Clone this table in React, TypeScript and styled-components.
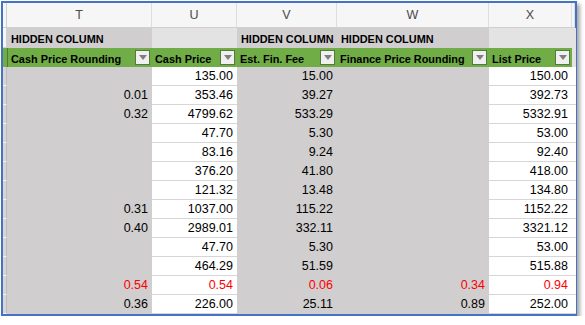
import { FC, Fragment, ReactElement } from 'react';
import styled, { createGlobalStyle } from 'styled-components';

const GlobalStyle = createGlobalStyle`
  body {
    margin: 0;
    background: #ffffff;
    font-family: "Liberation Sans", Arial, sans-serif;
  }
`;

type Col = { letter: string; width: number; hidden: boolean; title: string };

const columns: Col[] = [
  { letter: '', width: 4, hidden: false, title: '' },
  { letter: 'T', width: 145, hidden: true, title: 'Cash Price Rounding' },
  { letter: 'U', width: 85, hidden: false, title: 'Cash Price' },
  { letter: 'V', width: 100, hidden: true, title: 'Est. Fin. Fee' },
  { letter: 'W', width: 152, hidden: true, title: 'Finance Price Rounding' },
  { letter: 'X', width: 83, hidden: false, title: 'List Price' },
  { letter: '', width: 3, hidden: false, title: '' },
];

// T, U, V, W, X ; last flag = red text
const rows: [string, string, string, string, string, boolean][] = [
  ['', '135.00', '15.00', '', '150.00', false],
  ['0.01', '353.46', '39.27', '', '392.73', false],
  ['0.32', '4799.62', '533.29', '', '5332.91', false],
  ['', '47.70', '5.30', '', '53.00', false],
  ['', '83.16', '9.24', '', '92.40', false],
  ['', '376.20', '41.80', '', '418.00', false],
  ['', '121.32', '13.48', '', '134.80', false],
  ['0.31', '1037.00', '115.22', '', '1152.22', false],
  ['0.40', '2989.01', '332.11', '', '3321.12', false],
  ['', '47.70', '5.30', '', '53.00', false],
  ['', '464.29', '51.59', '', '515.88', false],
  ['0.54', '0.54', '0.06', '0.34', '0.94', true],
  ['0.36', '226.00', '25.11', '0.89', '252.00', false],
];

const Frame = styled.div`
  margin: 1px 0 0 1px;
  width: 572px;
  border: 2px solid #4472c4;
  box-shadow: 3px 3px 4px rgba(0, 0, 0, 0.35);
  background: #ffffff;
`;

const Sheet = styled.div`
  display: grid;
  grid-template-columns: ${columns.map((c) => `${c.width}px`).join(' ')};
  grid-template-rows: 25px 20px 19px repeat(13, 19px);
`;

const LetterCell = styled.div<{ $edge?: boolean }>`
  box-sizing: border-box;
  display: flex;
  align-items: center;
  justify-content: center;
  background: #f6f6f6;
  border-bottom: 1px solid #cfcfcf;
  border-right: 1px solid ${({ $edge }) => ($edge ? '#cfcfcf' : '#dedede')};
  color: #4a4a4a;
  font-size: 12.5px;
`;

const TitleCell = styled.div<{ $hidden: boolean }>`
  box-sizing: border-box;
  display: flex;
  align-items: flex-end;
  padding: 0 0 3px 4px;
  background: ${({ $hidden }) => ($hidden ? '#d0cece' : '#e4e3e3')};
  color: #000000;
  font-size: 10.9px;
  font-weight: bold;
  white-space: nowrap;
`;

const HeadCell = styled.div<{ $edge?: boolean }>`
  box-sizing: border-box;
  display: flex;
  align-items: center;
  justify-content: space-between;
  padding: 0 2px 0 3px;
  background: #70ad47;
  border-left: ${({ $edge }) => ($edge ? '1px solid #4d7a31' : 'none')};
  color: #000000;
  font-size: 10.9px;
  font-weight: bold;
  white-space: nowrap;
`;

const HeadLabel = styled.span`
  padding-top: 2px;
`;

const FilterButton = styled.span`
  box-sizing: border-box;
  display: flex;
  align-items: center;
  justify-content: center;
  width: 15px;
  height: 15px;
  background: #f0f0f0;
  border: 1px solid #55793f;
`;

const DataCell = styled.div<{ $hidden: boolean; $red: boolean }>`
  box-sizing: border-box;
  display: flex;
  align-items: flex-end;
  justify-content: flex-end;
  padding: 0 4px 2px 0;
  background: ${({ $hidden }) => ($hidden ? '#d0cece' : '#ffffff')};
  border-bottom: 1px solid ${({ $hidden }) => ($hidden ? '#d0cece' : '#d6d6d6')};
  color: ${({ $red }) => ($red ? '#ff0000' : '#000000')};
  font-size: 12.5px;
`;

const EdgeCell = styled.div`
  box-sizing: border-box;
  background: #d6d6d6;
  border-bottom: 1px solid #f2f2f2;
  border-right: 1px solid #bdbdbd;
`;

const Filter: FC = (): ReactElement => (
  <FilterButton>
    <svg width="8" height="5" viewBox="0 0 8 5">
      <polygon points="0,0 8,0 4,5" fill="#7f7f7f" />
    </svg>
  </FilterButton>
);

const App: FC = (): ReactElement => {
  const main = columns.slice(1, 6);

  return (
    <>
      <GlobalStyle />
      <Frame>
        <Sheet>
          {columns.map((c, i) => (
            <LetterCell key={`l${i}`} $edge={i === 0}>
              {c.letter}
            </LetterCell>
          ))}

          <LetterCell $edge />
          {main.map((c, i) => (
            <TitleCell key={`t${i}`} $hidden={c.hidden}>
              {c.hidden ? 'HIDDEN COLUMN' : ''}
            </TitleCell>
          ))}
          <TitleCell $hidden={false} />

          <HeadCell />
          {main.map((c, i) => (
            <HeadCell key={`h${i}`} $edge={i === 0}>
              <HeadLabel>{c.title}</HeadLabel>
              <Filter />
            </HeadCell>
          ))}
          <TitleCell $hidden={false} />

          {rows.map((r, ri) => (
            <Fragment key={`r${ri}`}>
              <EdgeCell />
              {main.map((c, ci) => (
                <DataCell key={ci} $hidden={c.hidden} $red={r[5]}>
                  {r[ci]}
                </DataCell>
              ))}
              <DataCell $hidden={false} $red={false} />
            </Fragment>
          ))}
        </Sheet>
      </Frame>
    </>
  );
};

export default App;
